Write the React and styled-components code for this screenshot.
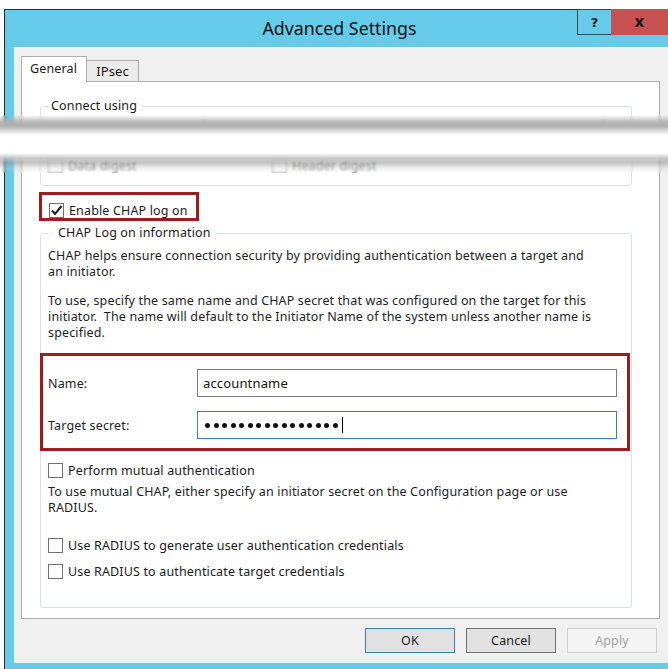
import React from "react";
import styled, { createGlobalStyle } from "styled-components";

const GlobalStyle = createGlobalStyle`
  html, body {
    margin: 0;
    padding: 0;
    background: #ffffff;
  }
  body {
    font-family: "Noto Sans", "Open Sans", sans-serif;
    font-size: 12.5px;
    letter-spacing: 0.15px;
    color: #1e1e1e;
  }
`;

const Page = styled.div`
  position: relative;
  width: 668px;
  height: 669px;
  padding: 9px 0 0 4px;
  box-sizing: border-box;
  overflow: hidden;
`;

const Window = styled.div`
  display: flex;
  flex-direction: column;
  height: 660px;
  border-top: 1px solid #2b2b2b;
  border-left: 1px solid #2b2b2b;
  background: #65cbe9;
  box-sizing: border-box;
`;

const TitleBar = styled.div`
  display: grid;
  grid-template-columns: 97px 1fr 91px;
  height: 37px;
  flex-shrink: 0;
`;

const Title = styled.div`
  grid-column: 2;
  align-self: center;
  margin-top: -1px;
  text-align: center;
  font-size: 17.8px;
  letter-spacing: 0;
  color: #111;
`;

const Controls = styled.div`
  display: flex;
  align-self: start;
  margin-top: -1px;
`;

const CaptionButton = styled.div`
  display: flex;
  align-items: center;
  justify-content: center;
  width: ${(p) => p.$width}px;
  height: 26px;
  box-sizing: border-box;
  background: ${(p) => (p.$close ? "#c75050" : "#65cbe9")};
  border: ${(p) => (p.$close ? "none" : "1px solid #2b4a55")};
  border-right: none;
  font-family: "DejaVu Sans", sans-serif;
  font-weight: bold;
  font-size: ${(p) => (p.$close ? 15 : 13)}px;
  color: #1a1a1a;
`;

const Frame = styled.div`
  flex: 1;
  display: flex;
  padding: 0 0 6px 9px;
`;

const Body = styled.div`
  flex: 1;
  display: flex;
  flex-direction: column;
  background: #f0f0f0;
  padding: 9px 8px 10px 7px;
`;

const TabStrip = styled.div`
  display: flex;
  align-items: flex-end;
  height: 26px;
  margin-bottom: -1px;
  position: relative;
  z-index: 1;
`;

const Tab = styled.div`
  display: flex;
  align-items: center;
  box-sizing: border-box;
  height: ${(p) => (p.$active ? 26 : 22)}px;
  padding: ${(p) => (p.$active ? "0 9px 3px 8px" : "0 9px 0 9px")};
  background: ${(p) => (p.$active ? "#ffffff" : "#ebebeb")};
  border: 1px solid #adadad;
  border-bottom: ${(p) => (p.$active ? "none" : "1px solid #adadad")};
  border-left: ${(p) => (p.$active ? "1px solid #adadad" : "none")};
  font-size: ${(p) => (p.$active ? 12.5 : 13)}px;
  color: #1a1a1a;
`;

const Panel = styled.div`
  display: flex;
  flex-direction: column;
  height: 538px;
  box-sizing: border-box;
  background: #ffffff;
  border: 1px solid #adadad;
  padding: 16px 27px 0 18px;
`;

const Group = styled.fieldset`
  margin: ${(p) => p.$top || 0}px 0 0 0;
  min-inline-size: 0;
  border: 1px solid #d9e1e7;
  border-radius: 3px;
  padding: 0 7px ${(p) => p.$bottom}px 7px;
  display: flex;
  flex-direction: column;
`;

const Legend = styled.legend`
  padding: 0 5px 0 ${(p) => p.$indent}px;
  line-height: 16px;
  color: #1a1a1a;
`;

const ComboRow = styled.div`
  height: 18px;
  display: flex;
`;

const Combo = styled.div`
  margin-left: 156px;
  width: 398px;
  margin-top: 6px;
  height: 12px;
  border: 1px solid #acacac;
  border-top: none;
`;

const OptionRow = styled.div`
  display: flex;
  align-items: center;
  margin-top: ${(p) => p.$top || 0}px;
  height: 15px;
`;

const CheckItem = styled.label`
  display: flex;
  align-items: center;
  gap: 5px;
  height: 15px;
  line-height: 15px;
  width: ${(p) => (p.$width ? `${p.$width}px` : "auto")};
  color: ${(p) => (p.$disabled ? "#8d8d8d" : "#1a1a1a")};
  white-space: nowrap;
`;

const Box = styled.span`
  display: inline-flex;
  align-items: center;
  justify-content: center;
  width: 15px;
  height: 15px;
  box-sizing: border-box;
  flex-shrink: 0;
  background: #ffffff;
  border: 1px solid ${(p) => (p.$disabled ? "#bcbcbc" : "#707070")};
`;

const Highlight = styled.div`
  border: 3px solid #9e1c20;
  box-sizing: border-box;
`;

const EnableBox = styled(Highlight)`
  align-self: flex-start;
  margin: 6px 0 0 -1px;
  padding: 8px 8px 0 7px;
`;

const CredentialBox = styled(Highlight)`
  display: flex;
  flex-direction: column;
  gap: 14px;
  margin: 12px -6px 0 -8px;
  padding: 13px 10px 9px 5px;
`;

const FieldRow = styled.div`
  display: flex;
  align-items: center;
`;

const FieldLabel = styled.div`
  width: 149px;
  flex-shrink: 0;
`;

const TextBox = styled.div`
  flex: 1;
  display: flex;
  align-items: center;
  height: 28px;
  box-sizing: border-box;
  padding-left: 5px;
  border: 1px solid ${(p) => (p.$focused ? "#3c7fb1" : "#7a7a7a")};
  font-size: 13px;
  color: #111;
`;

const Dots = styled.div`
  display: flex;
  gap: 3.5px;
  padding-left: 2px;
`;

const Dot = styled.span`
  width: 5px;
  height: 5px;
  border-radius: 50%;
  background: #111;
`;

const Caret = styled.span`
  width: 1px;
  height: 16px;
  margin-left: 4px;
  background: #000;
`;

const Paragraph = styled.p`
  margin: ${(p) => p.$top}px 0 0 0;
  line-height: 16px;
  white-space: nowrap;
`;

const ButtonRow = styled.div`
  display: flex;
  justify-content: flex-end;
  gap: 11px;
  margin-top: 9px;
  padding-right: 3px;
`;

const Button = styled.div`
  display: flex;
  align-items: center;
  justify-content: center;
  width: 90px;
  height: 25px;
  box-sizing: border-box;
  background: ${(p) => (p.$disabled ? "#f4f4f4" : "#e1e1e1")};
  border: 1px solid
    ${(p) => (p.$default ? "#3c7fb1" : p.$disabled ? "#d0d0d0" : "#707070")};
  color: ${(p) => (p.$disabled ? "#a3a3a3" : "#1a1a1a")};
`;

/* torn-paper cut across the top group */
const Tear = styled.div`
  position: absolute;
  left: 0;
  right: 0;
  top: 115px;
  display: flex;
  flex-direction: column;
  pointer-events: none;
`;

const TearEdge = styled.div`
  height: 20px;
  backdrop-filter: blur(1.2px);
  background: ${(p) =>
    p.$lower
      ? "linear-gradient(to bottom, #ffffff 0%, rgba(195,195,195,0.9) 25%, rgba(140,140,140,0.5) 50%, rgba(200,200,200,0.3) 75%, rgba(255,255,255,0) 100%)"
      : "linear-gradient(to bottom, rgba(255,255,255,0) 0%, rgba(175,175,175,0.9) 35%, rgba(176,176,176,1) 55%, rgba(218,218,218,1) 80%, #ffffff 100%)"};
`;

const TearGap = styled.div`
  height: 18px;
  background: #ffffff;
`;

const CheckMark = () => (
  <svg width="13" height="13" viewBox="0 0 13 13">
    <path d="M2 6.5 L5 10 L11.5 2" fill="none" stroke="#1e1e1e" strokeWidth="2" />
  </svg>
);

const Check = ({ label, checked, disabled, width }) => (
  <CheckItem $disabled={disabled} $width={width}>
    <Box $disabled={disabled}>{checked && <CheckMark />}</Box>
    {label}
  </CheckItem>
);

export default function App() {
  return (
    <Page>
      <GlobalStyle />
      <Window>
        <TitleBar>
          <Title>Advanced Settings</Title>
          <Controls>
            <CaptionButton $width={34}>?</CaptionButton>
            <CaptionButton $width={57} $close>
              x
            </CaptionButton>
          </Controls>
        </TitleBar>
        <Frame>
          <Body>
            <TabStrip>
              <Tab $active>General</Tab>
              <Tab>IPsec</Tab>
            </TabStrip>
            <Panel>
              <Group $bottom={12}>
                <Legend $indent={3}>Connect using</Legend>
                <ComboRow>
                  <Combo />
                </ComboRow>
                <OptionRow $top={26}>
                  <Check label="Data digest" disabled width={224} />
                  <Check label="Header digest" disabled />
                </OptionRow>
              </Group>

              <EnableBox>
                <Check label="Enable CHAP log on" checked />
              </EnableBox>

              <Group $bottom={28} $top={4}>
                <Legend $indent={10}>CHAP Log on information</Legend>
                <Paragraph $top={7}>
                  CHAP helps ensure connection security by providing authentication between a target and
                  <br />
                  an initiator.
                </Paragraph>
                <Paragraph $top={13}>
                  To use, specify the same name and CHAP secret that was configured on the target for this
                  <br />
                  initiator.{"\u00a0"} The name will default to the Initiator Name of the system unless another name is
                  <br />
                  specified.
                </Paragraph>

                <CredentialBox>
                  <FieldRow>
                    <FieldLabel>Name:</FieldLabel>
                    <TextBox>accountname</TextBox>
                  </FieldRow>
                  <FieldRow>
                    <FieldLabel>Target secret:</FieldLabel>
                    <TextBox $focused>
                      <Dots>
                        {Array.from({ length: 16 }, (_, i) => (
                          <Dot key={i} />
                        ))}
                      </Dots>
                      <Caret />
                    </TextBox>
                  </FieldRow>
                </CredentialBox>

                <OptionRow $top={12}>
                  <Check label="Perform mutual authentication" />
                </OptionRow>
                <Paragraph $top={6}>
                  To use mutual CHAP, either specify an initiator secret on the Configuration page or use
                  <br />
                  RADIUS.
                </Paragraph>
                <OptionRow $top={22}>
                  <Check label="Use RADIUS to generate user authentication credentials" />
                </OptionRow>
                <OptionRow $top={11}>
                  <Check label="Use RADIUS to authenticate target credentials" />
                </OptionRow>
              </Group>
            </Panel>
            <ButtonRow>
              <Button $default>OK</Button>
              <Button>Cancel</Button>
              <Button $disabled>Apply</Button>
            </ButtonRow>
          </Body>
        </Frame>
      </Window>
      <Tear>
        <TearEdge />
        <TearGap />
        <TearEdge $lower />
      </Tear>
    </Page>
  );
}
